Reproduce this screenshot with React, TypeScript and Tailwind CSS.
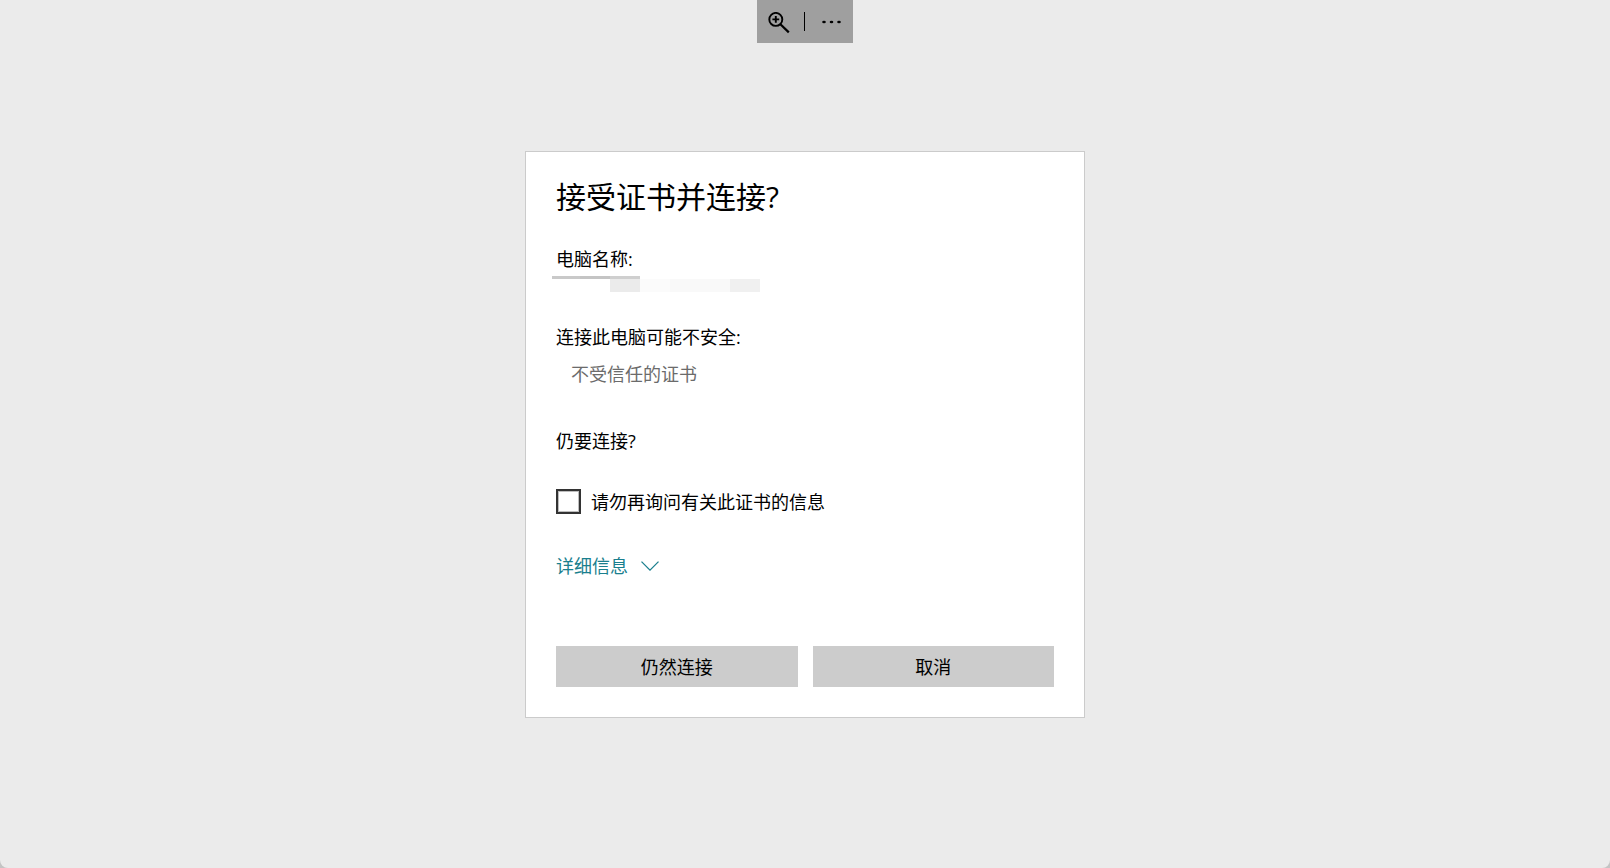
import { useState } from "react";

function MagnifierIcon() {
  return (
    <svg width="22" height="22" viewBox="0 0 22 22" fill="none" stroke="#000" aria-hidden="true">
      <circle cx="7.8" cy="7.4" r="6.5" strokeWidth="1.9" />
      <path d="M12.4 12.2 L20.8 20.4" strokeWidth="2.2" />
      <path d="M7.8 4 V10.8 M4.4 7.4 H11.2" strokeWidth="1.9" />
    </svg>
  );
}

function Toolbar() {
  return (
    <div className="absolute top-0 left-1/2 flex h-[43px] w-24 -translate-x-1/2 items-center bg-[#9f9f9f]">
      <button type="button" aria-label="缩放" className="flex h-full w-[47px] items-center pt-[3px] pl-[11px]">
        <MagnifierIcon />
      </button>
      <span className="h-[19px] w-px bg-black" />
      <button type="button" aria-label="更多" className="flex h-full flex-1 items-center justify-center pt-px pl-[6px]">
        <svg width="20" height="4" viewBox="0 0 20 4" aria-hidden="true">
          <ellipse cx="2" cy="2" rx="1.8" ry="1.3" />
          <ellipse cx="9.5" cy="2" rx="1.8" ry="1.3" />
          <ellipse cx="17" cy="2" rx="1.8" ry="1.3" />
        </svg>
      </button>
    </div>
  );
}

function RedactedName() {
  return (
    <div className="mt-[5px] -ml-1" aria-hidden="true">
      <div className="flex h-[3px]">
        <span className="w-7 bg-[#c9c9c9]" />
        <span className="w-[30px] bg-[#c4c4c4]" />
        <span className="w-[30px] bg-[#cfcfcf]" />
      </div>
      <div className="flex h-[13px] pl-[58px]">
        <span className="w-[30px] bg-[#ebebeb]" />
        <span className="w-[30px] bg-[#fbfbfb]" />
        <span className="w-[60px] bg-[#f9f9f9]" />
        <span className="w-[30px] bg-[#f0f0f0]" />
      </div>
    </div>
  );
}

export default function App() {
  const [remember, setRemember] = useState(false);

  return (
    <div className="bg-[#c4c4c4] font-['Open_Sans','Noto_Sans_CJK_SC',sans-serif] text-black" lang="zh-CN">
      <div className="relative flex min-h-screen items-center justify-center rounded-b-lg bg-[#ebebeb]">
        <Toolbar />
        <main className="mt-px w-full max-w-[560px] border border-[#cbcbcb] bg-white px-[30px] pt-[25px] pb-[30px] text-[18px] leading-6">
          <h1 className="text-[30px] leading-10">接受证书并连接?</h1>

          <p className="mt-[30px]">电脑名称:</p>
          <RedactedName />

          <p className="mt-[33px]">连接此电脑可能不安全:</p>
          <p className="mt-[13px] pl-[15px] text-[#6b6b6b]">不受信任的证书</p>

          <p className="mt-[43px]">仍要连接?</p>

          <label className="mt-9 flex items-center gap-[10px]">
            <input
              type="checkbox"
              checked={remember}
              onChange={(e) => setRemember(e.target.checked)}
              className="size-[25px] shrink-0 appearance-none border-2 border-[#333] bg-white shadow-[inset_0_0_0_1px_#bdbdbd] checked:bg-[#1a7a8a]"
            />
            <span>请勿再询问有关此证书的信息</span>
          </label>

          <button type="button" className="mt-10 flex items-center gap-[13px] text-[#1a7f8e]">
            <span>详细信息</span>
            <svg width="18" height="10" viewBox="0 0 18 10" fill="none" stroke="currentColor" strokeWidth="1.3" aria-hidden="true">
              <path d="M0.5 0.6 L9 9.1 L17.5 0.6" />
            </svg>
          </button>

          <div className="mt-[68px] grid grid-cols-2 gap-[15px]">
            <button type="button" className="h-[41px] bg-[#cccccc]">仍然连接</button>
            <button type="button" className="h-[41px] bg-[#cccccc]">取消</button>
          </div>
        </main>
      </div>
    </div>
  );
}
